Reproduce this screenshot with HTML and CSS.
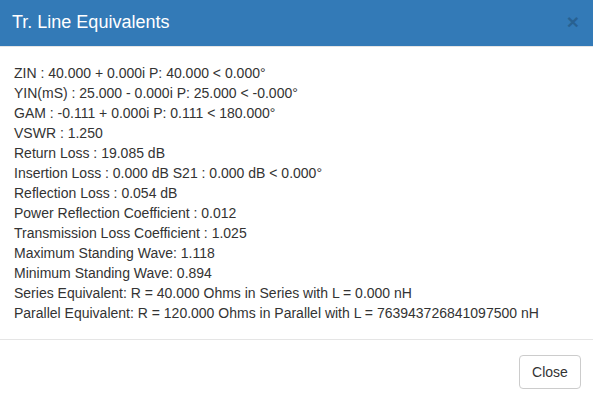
FILE: index.html
```html
<!DOCTYPE html>
<html>
<head>
<meta charset="utf-8">
<link rel="stylesheet" href="styles.css">
</head>
<body>
<div class="modal">
  <div class="modal-header">
    <h4 class="modal-title">Tr. Line Equivalents</h4>
    <button class="close" type="button">&times;</button>
  </div>
  <div class="modal-body">
    <div>ZIN : 40.000 + 0.000i P: 40.000 &lt; 0.000°</div>
    <div>YIN(mS) : 25.000 - 0.000i P: 25.000 &lt; -0.000°</div>
    <div>GAM : -0.111 + 0.000i P: 0.111 &lt; 180.000°</div>
    <div>VSWR : 1.250</div>
    <div>Return Loss : 19.085 dB</div>
    <div>Insertion Loss : 0.000 dB S21 : 0.000 dB &lt; 0.000°</div>
    <div>Reflection Loss : 0.054 dB</div>
    <div>Power Reflection Coefficient : 0.012</div>
    <div>Transmission Loss Coefficient : 1.025</div>
    <div>Maximum Standing Wave: 1.118</div>
    <div>Minimum Standing Wave: 0.894</div>
    <div>Series Equivalent: R = 40.000 Ohms in Series with L = 0.000 nH</div>
    <div>Parallel Equivalent: R = 120.000 Ohms in Parallel with L = 763943726841097500 nH</div>
  </div>
  <div class="modal-footer">
    <button class="btn" type="button">Close</button>
  </div>
</div>
</body>
</html>
```
FILE: styles.css
```css
html, body {
  margin: 0;
  padding: 0;
  background: #fff;
}
body {
  font-family: "Liberation Sans", Arial, sans-serif;
  font-size: 14px;
  line-height: 20px;
  color: #333;
}
.modal {
  width: 593px;
}
.modal-header {
  background: #337ab7;
  height: 47px;
  box-sizing: border-box;
  padding: 0 13px 0 12px;
  display: flex;
  align-items: center;
  justify-content: space-between;
  border-bottom: 1px solid #e5e5e5;
}
.modal-title {
  margin: 0;
  font-size: 18px;
  font-weight: normal;
  line-height: 20px;
  color: #fff;
  padding-bottom: 2px;
}
.close {
  background: none;
  border: 0;
  padding: 0;
  font-family: "Liberation Sans", Arial, sans-serif;
  font-size: 21px;
  font-weight: bold;
  line-height: 1;
  color: #000;
  opacity: 0.2;
  margin-right: 1px;
  margin-bottom: 3px;
}
.modal-body {
  padding: 16px 14px 16px 14px;
}
.modal-footer {
  border-top: 1px solid #e5e5e5;
  padding: 15px 12px 15px 15px;
  display: flex;
  justify-content: flex-end;
}
.btn {
  font-family: "Liberation Sans", Arial, sans-serif;
  font-size: 14px;
  line-height: 20px;
  color: #333;
  background: #fff;
  border: 1px solid #ccc;
  border-radius: 4px;
  padding: 6px 12px;
  height: 34px;
  box-sizing: border-box;
  width: 62px;
}
```
